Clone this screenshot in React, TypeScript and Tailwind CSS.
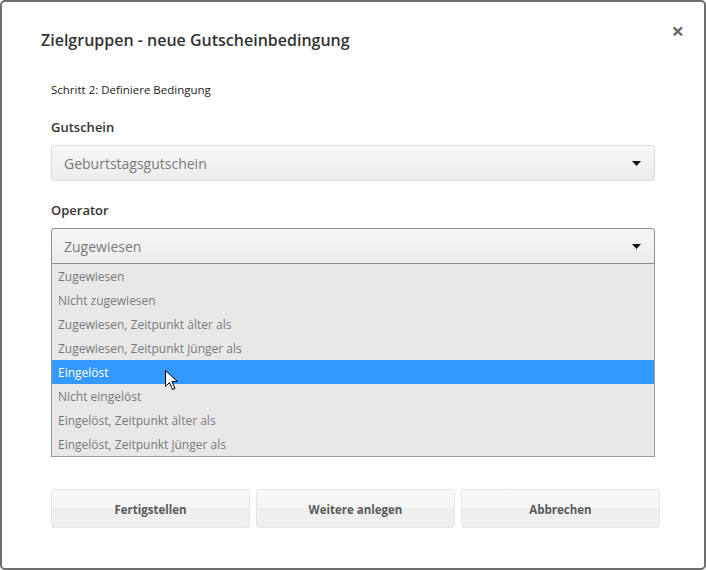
import React from 'react';

const options = [
  'Zugewiesen',
  'Nicht zugewiesen',
  'Zugewiesen, Zeitpunkt älter als',
  'Zugewiesen, Zeitpunkt jünger als',
  'Eingelöst',
  'Nicht eingelöst',
  'Eingelöst, Zeitpunkt älter als',
  'Eingelöst, Zeitpunkt jünger als',
];

const Caret = () => (
  <svg width="9" height="5" viewBox="0 0 9 5" className="shrink-0">
    <path d="M0 0h9L4.5 5z" fill="#111" />
  </svg>
);

const Cursor = () => (
  <svg width="13" height="21" viewBox="0 0 13 21" className="absolute left-[113px] top-[10px]">
    <path
      d="M0.5 0.5v16l4-4 3 7 2.5-1-3-7h5.5z"
      fill="#fff"
      stroke="#000"
      strokeWidth="1"
      strokeLinejoin="round"
    />
  </svg>
);

export default function App() {
  return (
    <div
      className="w-[706px] h-[570px] bg-white"
      style={{ fontFamily: '"Open Sans", "Noto Sans", sans-serif' }}
    >
      {/* Modal */}
      <div className="relative w-[706px] h-[570px] border-2 border-[#6e6e6e] rounded-[5px] bg-white">
        {/* Close button */}
        <button className="absolute right-[20px] top-[17px] text-[#6a6a6a] text-[22px] font-bold leading-none">
          ×
        </button>

        <h2 className="pl-[39px] pt-[26px] text-[16px] font-semibold text-[#333] leading-[24px]">
          Zielgruppen - neue Gutscheinbedingung
        </h2>

        <div className="pl-[49px]">
          <p className="mt-[30px] text-[11.5px] text-[#222] leading-[16px]">
            Schritt 2: Definiere Bedingung
          </p>

          {/* Gutschein */}
          <label className="block mt-[20px] text-[13px] font-semibold text-[#333] leading-[18px]">
            Gutschein
          </label>
          <div className="mt-[9px] w-[604px] h-[36px] flex items-center justify-between pl-[12px] pr-[13px] rounded-[3px] border border-[#dcdcdc] bg-gradient-to-b from-[#f7f7f7] to-[#ececec]">
            <span className="text-[14px] text-[#7a7a7a]">Geburtstagsgutschein</span>
            <Caret />
          </div>

          {/* Operator */}
          <label className="block mt-[20px] text-[13px] font-semibold text-[#333] leading-[18px]">
            Operator
          </label>
          <div className="mt-[9px] w-[604px]">
            <div className="h-[36px] flex items-center justify-between pl-[12px] pr-[13px] rounded-t-[3px] border border-[#8c8c8c] bg-gradient-to-b from-[#f7f7f7] to-[#ececec]">
              <span className="text-[14px] text-[#7a7a7a]">Zugewiesen</span>
              <Caret />
            </div>
            <ul className="border border-t-0 border-[#9a9a9a] bg-[#e8e8e8]">
              {options.map((o) => (
                <li
                  key={o}
                  className={
                    o === 'Eingelöst'
                      ? 'relative h-[24px] flex items-center pl-[6px] pt-[1px] text-[12px] bg-[#3399ff] text-white'
                      : 'h-[24px] flex items-center pl-[6px] pt-[1px] text-[12px] text-[#7a7a7a]'
                  }
                >
                  {o}
                  {o === 'Eingelöst' && <Cursor />}
                </li>
              ))}
            </ul>
          </div>

          {/* Buttons */}
          <div className="mt-[32px] flex gap-[6px]">
            {['Fertigstellen', 'Weitere anlegen', 'Abbrechen'].map((b) => (
              <button
                key={b}
                className="shrink-0 w-[199px] h-[39px] pt-[3px] rounded-[3px] border border-[#e6e6e6] bg-[linear-gradient(to_bottom,#f9f9f9_0%,#f5f5f5_50%,#efefef_50%,#efefef_100%)] text-[11.5px] font-bold text-[#5a5a5a]"
              >
                {b}
              </button>
            ))}
          </div>
        </div>
      </div>
    </div>
  );
}
